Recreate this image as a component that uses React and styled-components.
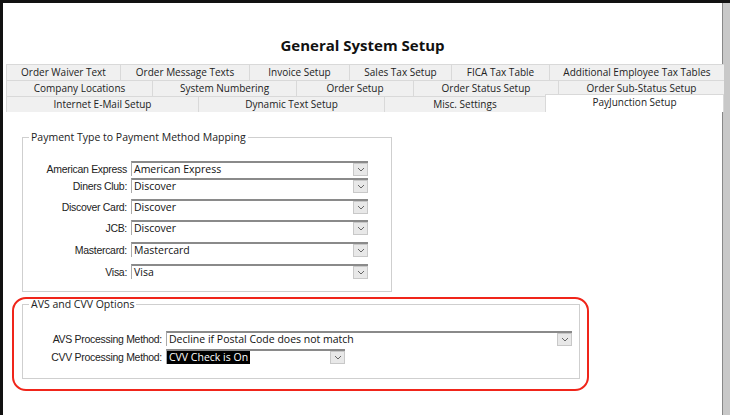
import React from "react";
import styled, { createGlobalStyle } from "styled-components";

const G = createGlobalStyle`
  html,body{margin:0;padding:0;background:#1a1a1a;}
  body{width:730px;height:415px;overflow:hidden;font-family:"Segoe UI","Noto Sans","Open Sans",sans-serif;}
`;
const Frame = styled.div`
  width:730px;height:415px;box-sizing:border-box;padding:3px 0 0 3px;background:#111;display:flex;
`;
const Win = styled.div`
  width:719px;background:#fff;display:flex;flex-direction:column;position:relative;
`;
const SideBar = styled.div`width:8px;background:#c8c8c8;border-left:1px solid #888;`;
const Title = styled.div`
  text-align:center;font-weight:bold;font-size:15px;color:#111;margin-top:32px;height:26px;line-height:20px;
  font-family:"Open Sans","Noto Sans",sans-serif;
`;
const Tabs = styled.div`margin:3px 0 0 3px;width:718px;display:flex;flex-direction:column;`;
const Row = styled.div`display:flex;height:16px;`;
const Tab = styled.div`
  width:${p=>p.w}px;box-sizing:border-box;border:1px solid #d9d9d9;border-right:none;border-bottom:none;
  background:${p=>p.sel?"#fff":"#f0f0f0"};font-size:10px;color:#222;text-align:center;
  line-height:${p=>p.sel?"14px":"15px"};white-space:nowrap;
  font-family:"Open Sans","Noto Sans",sans-serif;
  ${p=>p.sel?"margin-top:-2px;height:18px;border-right:1px solid #d9d9d9;":""}
`;
const Group = styled.fieldset`
  margin:${p=>p.m};width:${p=>p.w}px;height:${p=>p.h}px;box-sizing:border-box;
  border:1px solid #cfcfcf;padding:0;font-family:"Liberation Sans",Arial,sans-serif;font-size:10.5px;
`;
const Legend = styled.legend`padding:0 2px;margin-left:6px;font-size:10.5px;color:#222;font-family:"Open Sans","Noto Sans",sans-serif;`;
const Field = styled.div`display:flex;align-items:center;height:${p=>p.h||17}px;margin-top:${p=>p.t||0}px;`;
const Label = styled.div`width:${p=>p.w}px;text-align:right;padding-right:4px;color:#222;font-size:10.5px;letter-spacing:-0.3px;`;
const Combo = styled.div`
  width:${p=>p.w}px;height:15px;box-sizing:border-box;border-top:2px solid #8a8a8a;border-left:1px solid #aaa;
  background:#fff;display:flex;align-items:center;justify-content:space-between;font-size:10.5px;color:#111;
  font-family:"Open Sans","Noto Sans",sans-serif;
`;
const Val = styled.span`padding:0 2px;background:${p=>p.sel?"#000":"transparent"};color:${p=>p.sel?"#fff":"#111"};line-height:13px;`;
const Btn = styled.div`
  width:15px;height:13px;background:#e8e8e8;border:1px solid #c8c8c8;box-sizing:border-box;display:flex;align-items:center;justify-content:center;
`;
const Ring = styled.div`
  position:absolute;left:9px;top:294px;width:577px;height:94px;border:2.5px solid #f0251a;border-radius:14px;box-sizing:border-box;
`;
const Chev = () => <Btn><svg width="8" height="5" viewBox="0 0 8 5"><path d="M1 1l3 3 3-3" stroke="#666" fill="none"/></svg></Btn>;

const rows = [
  [["Order Waiver Text",114],["Order Message Texts",129],["Invoice Setup",100],["Sales Tax Setup",102],["FICA Tax Table",98],["Additional Employee Tax Tables",175]],
  [["Company Locations",146],["System Numbering",144],["Order Setup",117],["Order Status Setup",145],["Order Sub-Status Setup",166]],
  [["Internet E-Mail Setup",192],["Dynamic Text Setup",186],["Misc. Settings",161],["PayJunction Setup",179,true]],
];
const pay = [["American Express","American Express",162],["Diners Club:","Discover",179],["Discover Card:","Discover",200],["JCB:","Discover",221],["Mastercard:","Mastercard",243],["Visa:","Visa",265]];

export default function App(){
  let prev = 145;
  return <><G/><Frame><Win>
    <Title>General System Setup</Title>
    <Tabs>{rows.map((r,i)=><Row key={i}>{r.map(([t,w,s])=><Tab key={t} w={w} sel={s}>{t}</Tab>)}</Row>)}</Tabs>
    <Group m="18px 0 0 19px" w={370} h={162}>
      <Legend>Payment Type to Payment Method Mapping</Legend>
      {pay.map(([l,v,y],i)=>{const t=y-prev-(i?15:0);prev=y;return <Field key={l} t={t} h={15}><Label w={104}>{l}</Label><Combo w={237}><Val>{v}</Val><Chev/></Combo></Field>})}
    </Group>
    <Group m="5px 0 0 19px" w={558} h={82}>
      <Legend>AVS and CVV Options</Legend>
      <Field t={20} h={15}><Label w={139}>AVS Processing Method:</Label><Combo w={406}><Val>Decline if Postal Code does not match</Val><Chev/></Combo></Field>
      <Field t={3} h={15}><Label w={139}>CVV Processing Method:</Label><Combo w={179}><Val sel>CVV Check is On</Val><Chev/></Combo></Field>
    </Group>
    <Ring/>
  </Win><SideBar/></Frame></>;
}
